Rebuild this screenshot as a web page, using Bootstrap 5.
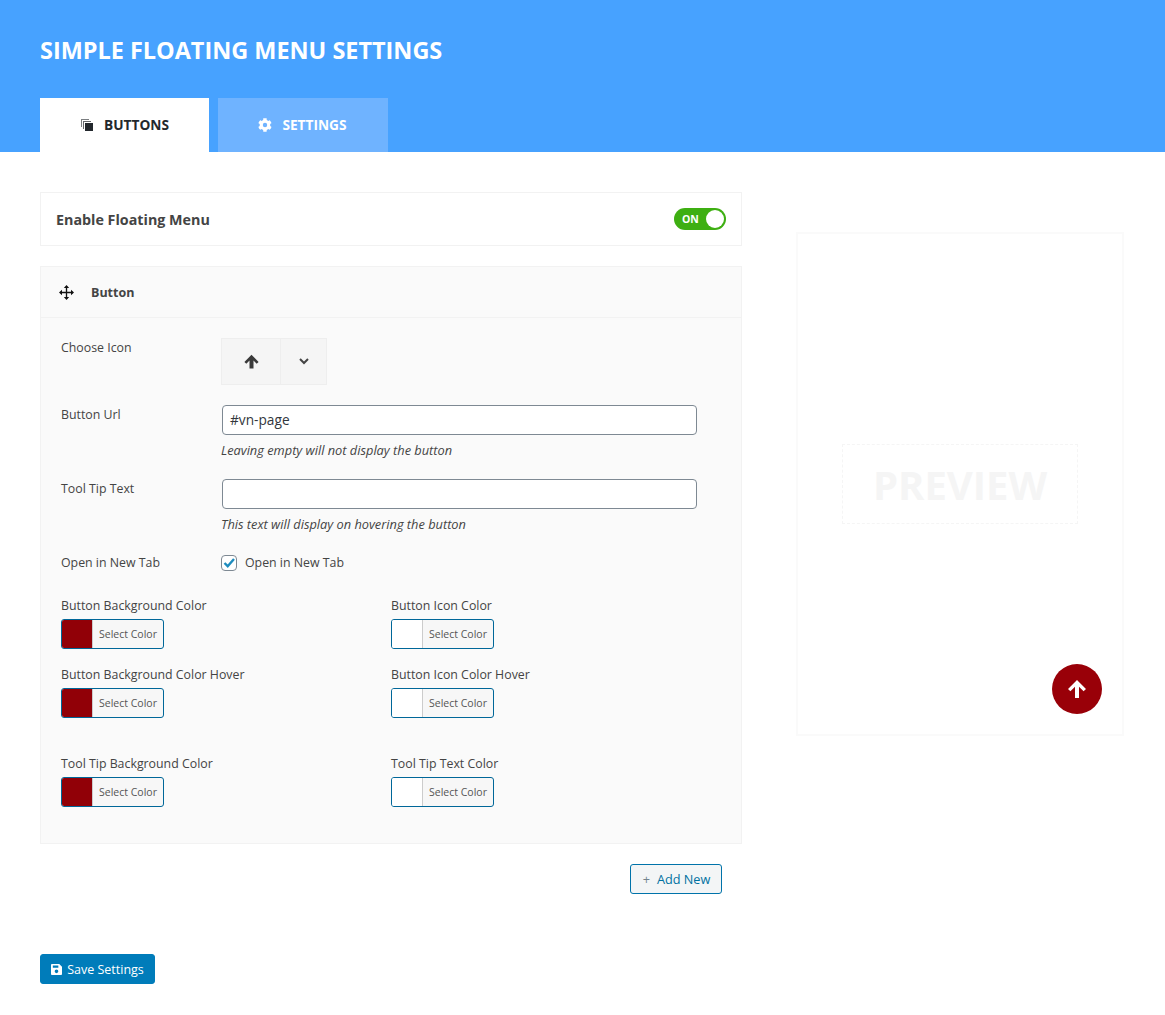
<!DOCTYPE html>
<html lang="en">
<head>
<meta charset="utf-8">
<title>Simple Floating Menu Settings</title>
<link href="https://cdn.jsdelivr.net/npm/bootstrap@5.3.0/dist/css/bootstrap.min.css" rel="stylesheet">
<style>
html,body{height:1015px;overflow:hidden}
body{font-family:"Open Sans","Noto Sans",sans-serif;font-size:12.35px;color:#444;background:#fff;line-height:18px}
.top-band{background:#47a2ff;height:152px;padding:0 40px}
.page-title{color:#fff;font-size:23.45px;font-weight:700;line-height:32px;margin:0;padding-top:34px;height:98px;text-transform:uppercase;font-family:"Open Sans",sans-serif}
.tab-strip{gap:9px;height:54px}
.tab-item{height:54px;font-size:13.7px;font-weight:700;text-transform:uppercase;gap:10px;color:#fff;background:#6fb3ff}
.tab-item svg{width:14px;height:14px;fill:currentColor}
.tab-on{width:169px;background:#fff;color:#23282d}
.tab-off{width:170px;padding-right:1px}
.body-wrap{padding:40px 40px 0}
.left-col{width:702px}
.right-col{width:328px;margin-left:54px;margin-top:40px}
.enable-row{height:54px;border:1px solid #f2f2f2;padding:0 15px;margin-bottom:20px}
.enable-label{font-size:14.3px;font-weight:700;line-height:20px;padding-top:1px}
.switch-pill{width:52px;height:22px;border-radius:11px;background:#3eaf12;color:#fff;font-size:10.5px;font-weight:700;padding:0 2px 0 8px}
.switch-knob{width:18px;height:18px;border-radius:50%;background:#fff}
.panel-box{height:578px;background:#fafafa;border:1px solid #f2f2f2}
.panel-head{height:51px;border-bottom:1px solid #f2f2f2;padding-left:18px;font-weight:700;font-size:12.5px}
.panel-head span{padding-top:2px}
.panel-head svg{width:15px;height:15px;margin-right:17px}
.panel-body{padding:20px 20px 0}
.field-name{width:160px;flex:none;line-height:20px}
.icon-pick{width:106px;height:47px;border:1px solid #eee;background:#f5f5f5}
.icon-main{width:59px;border-right:1px solid #eee}
.url-input{width:475px;height:30px;margin-left:1px;border:1px solid #7e8993;border-radius:4px;background:#fff;padding:0 7px;font-size:13.7px;line-height:28px;color:#32373c}
.hint-text{font-style:italic;font-size:12.8px;margin-top:6px;height:18px;line-height:18px}
.gap-a{margin-top:20px}
.tick-box{width:16px;height:16px;border:1px solid #7e8993;border-radius:4px;background:#fff;margin-right:8px}
.tick-box svg{width:12px;height:12px}
.tick-text{line-height:20px}
.color-cell{width:330px}
.color-name{height:18px;line-height:20px;margin-bottom:5px}
.color-btn{width:103px;height:30px;border:1px solid #006799;border-radius:3px;background:#f7f7f7;font-size:10.5px;overflow:hidden;color:#555}
.swatch{width:31px;height:100%;border-right:1px solid #ccc}
.swatch-red{background:#910007}
.swatch-white{background:#fff}
.color-caption{flex:1;text-align:center;line-height:20px}
.color-first{margin-top:23px}
.color-second{margin-top:16px}
.color-third{margin-top:36px}
.add-btn{width:92px;height:30px;margin:20px 20px 0 auto;border:1px solid #0073aa;border-radius:3px;background:#f3f5f6;color:#0071a1;font-size:12.7px;line-height:28px;padding:0 0 0 1px}
.add-plus{color:#72828c;margin-right:7px}
.save-btn{width:115px;height:30px;margin-top:60px;background:#007cba;border:1px solid #007cba;border-radius:3px;color:#fff;font-size:12.5px;line-height:20px;padding:0;gap:5px}
.save-btn span{padding-top:1px}
.save-btn svg{width:11px;height:11px;fill:#fff}
.preview-box{height:504px;border:2px solid #fafafa;padding-top:210px}
.preview-label{width:236px;height:80px;margin-left:44px;border:1px dashed #f5f5f5;color:#f5f5f5;font-size:40px;font-weight:700;line-height:80px;text-align:center}
.float-round{right:20px;bottom:20px;width:50px;height:50px;border-radius:50%;background:#990008}
.float-round svg{width:20px;height:20px;fill:#fff}
</style>
</head>
<body>
<header class="top-band">
  <h1 class="page-title">Simple Floating Menu Settings</h1>
  <div class="d-flex tab-strip">
    <div class="tab-item tab-on d-flex align-items-center justify-content-center">
      <svg viewBox="0 0 14 14"><path d="M1 1h8v1H2v7H1z" opacity=".6"/><path d="M3 3h8v1H4v7H3z" opacity=".7"/><rect x="5" y="5" width="8" height="8"/></svg>
      <span>Buttons</span>
    </div>
    <div class="tab-item tab-off d-flex align-items-center justify-content-center">
      <svg viewBox="0 0 512 512"><path d="M487 316l-43-25c4-23 4-47 0-70l43-25c5-3 7-9 5-14-11-36-30-68-56-95-4-4-10-5-14-2l-43 25c-18-15-39-27-61-35V25c0-6-4-10-9-12-37-8-75-8-110 0-5 2-9 6-9 12v50c-22 8-43 20-61 35L86 85c-5-3-11-2-14 2-26 27-45 59-56 95-2 5 0 11 5 14l43 25c-4 23-4 47 0 70l-43 25c-5 3-7 9-5 14 11 36 30 68 56 95 3 4 9 5 14 2l43-25c18 15 39 27 61 35v50c0 6 4 10 9 12 37 8 75 8 110 0 5-2 9-6 9-12v-50c22-8 43-20 61-35l43 25c4 3 10 2 14-2 26-27 45-59 56-95 2-5 0-11-5-14zM256 336a80 80 0 1 1 0-160 80 80 0 0 1 0 160z"/></svg>
      <span>Settings</span>
    </div>
  </div>
</header>

<main class="body-wrap d-flex">
  <div class="left-col">
    <div class="enable-row d-flex align-items-center justify-content-between">
      <span class="enable-label">Enable Floating Menu</span>
      <span class="switch-pill d-flex align-items-center justify-content-between"><span>ON</span><span class="switch-knob"></span></span>
    </div>

    <section class="panel-box">
      <div class="panel-head d-flex align-items-center">
        <svg viewBox="0 0 18 18" fill="none" stroke="#111" stroke-width="1.6"><path d="M9 2v14M2 9h14"/><path d="M9 0L5.8 3.6h6.4zM9 18l-3.2-3.6h6.4zM0 9l3.6-3.2v6.4zM18 9l-3.6-3.2v6.4z" fill="#111" stroke="none"/></svg>
        <span>Button</span>
      </div>
      <div class="panel-body">
        <div class="d-flex">
          <div class="field-name">Choose Icon</div>
          <div class="icon-pick d-flex">
            <div class="icon-main d-flex align-items-center justify-content-center">
              <svg width="15" height="15" viewBox="0 0 15 15" fill="#3a3a3a"><path d="M7.5 .8L14.6 8l-1.9 1.8-3.2-3.2V14.4h-4V6.6L2.3 9.8.4 8z"/></svg>
            </div>
            <div class="flex-fill d-flex align-items-center justify-content-center">
              <svg width="10" height="7" viewBox="0 0 10 7" fill="none" stroke="#444" stroke-width="2"><path d="M1 1l4 4 4-4"/></svg>
            </div>
          </div>
        </div>

        <div class="d-flex gap-a">
          <div class="field-name">Button Url</div>
          <div>
            <div class="url-input">#vn-page</div>
            <div class="hint-text">Leaving empty will not display the button</div>
          </div>
        </div>

        <div class="d-flex gap-a">
          <div class="field-name">Tool Tip Text</div>
          <div>
            <div class="url-input"></div>
            <div class="hint-text">This text will display on hovering the button</div>
          </div>
        </div>

        <div class="d-flex gap-a">
          <div class="field-name">Open in New Tab</div>
          <div class="d-flex align-items-center">
            <span class="tick-box d-flex align-items-center justify-content-center">
              <svg viewBox="0 0 12 12" fill="none" stroke="#1e8cbe" stroke-width="2.4"><path d="M1.5 6l3.2 3.2L11 2"/></svg>
            </span>
            <span class="tick-text">Open in New Tab</span>
          </div>
        </div>

        <div class="d-flex color-first">
          <div class="color-cell">
            <div class="color-name">Button Background Color</div>
            <div class="color-btn d-flex align-items-center"><span class="swatch swatch-red"></span><span class="color-caption">Select Color</span></div>
          </div>
          <div class="color-cell">
            <div class="color-name">Button Icon Color</div>
            <div class="color-btn d-flex align-items-center"><span class="swatch swatch-white"></span><span class="color-caption">Select Color</span></div>
          </div>
        </div>
        <div class="d-flex color-second">
          <div class="color-cell">
            <div class="color-name">Button Background Color Hover</div>
            <div class="color-btn d-flex align-items-center"><span class="swatch swatch-red"></span><span class="color-caption">Select Color</span></div>
          </div>
          <div class="color-cell">
            <div class="color-name">Button Icon Color Hover</div>
            <div class="color-btn d-flex align-items-center"><span class="swatch swatch-white"></span><span class="color-caption">Select Color</span></div>
          </div>
        </div>
        <div class="d-flex color-third">
          <div class="color-cell">
            <div class="color-name">Tool Tip Background Color</div>
            <div class="color-btn d-flex align-items-center"><span class="swatch swatch-red"></span><span class="color-caption">Select Color</span></div>
          </div>
          <div class="color-cell">
            <div class="color-name">Tool Tip Text Color</div>
            <div class="color-btn d-flex align-items-center"><span class="swatch swatch-white"></span><span class="color-caption">Select Color</span></div>
          </div>
        </div>
      </div>
    </section>

    <div class="d-flex"><button type="button" class="btn add-btn"><span class="add-plus">+</span>Add New</button></div>
    <button type="button" class="btn save-btn d-flex align-items-center justify-content-center">
      <svg viewBox="0 0 12 12"><path d="M1 0h8l3 3v8a1 1 0 0 1-1 1H1a1 1 0 0 1-1-1V1a1 1 0 0 1 1-1zm1 1.5V4h6V1.5zM6 6a2 2 0 1 0 0 4 2 2 0 0 0 0-4z"/></svg>
      <span>Save Settings</span>
    </button>
  </div>

  <aside class="right-col">
    <div class="preview-box position-relative">
      <div class="preview-label">PREVIEW</div>
      <div class="float-round position-absolute d-flex align-items-center justify-content-center">
        <svg viewBox="0 0 20 20"><path d="M10 1l9 9-2.4 2.2L12 7.8V19H8V7.8l-4.6 4.4L1 10z"/></svg>
      </div>
    </div>
  </aside>
</main>
</body>
</html>
